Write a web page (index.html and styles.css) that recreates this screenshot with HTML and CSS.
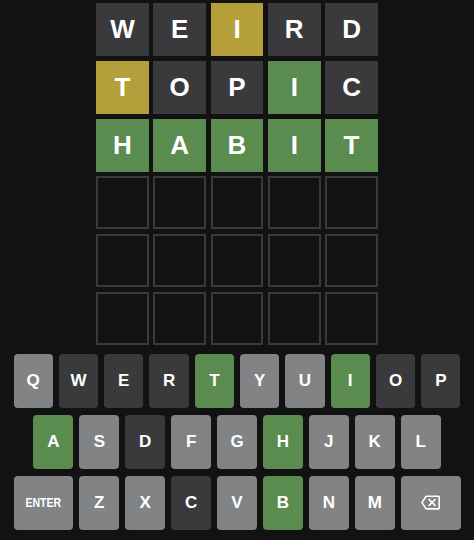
FILE: index.html
```
<!DOCTYPE html>
<html>
<head>
<meta charset="utf-8">
<link rel="stylesheet" href="styles.css">
</head>
<body>
<div class="board">
  <div class="tile absent">W</div><div class="tile absent">E</div><div class="tile present">I</div><div class="tile absent">R</div><div class="tile absent">D</div>
  <div class="tile present">T</div><div class="tile absent">O</div><div class="tile absent">P</div><div class="tile correct">I</div><div class="tile absent">C</div>
  <div class="tile correct">H</div><div class="tile correct">A</div><div class="tile correct">B</div><div class="tile correct">I</div><div class="tile correct">T</div>
  <div class="tile empty"></div><div class="tile empty"></div><div class="tile empty"></div><div class="tile empty"></div><div class="tile empty"></div>
  <div class="tile empty"></div><div class="tile empty"></div><div class="tile empty"></div><div class="tile empty"></div><div class="tile empty"></div>
  <div class="tile empty"></div><div class="tile empty"></div><div class="tile empty"></div><div class="tile empty"></div><div class="tile empty"></div>
</div>
<div class="keyboard">
  <div class="krow">
    <div class="key">Q</div><div class="key k-absent">W</div><div class="key k-absent">E</div><div class="key k-absent">R</div><div class="key k-correct">T</div><div class="key">Y</div><div class="key">U</div><div class="key k-correct">I</div><div class="key k-absent">O</div><div class="key k-absent">P</div>
  </div>
  <div class="krow">
    <div class="half"></div>
    <div class="key k-correct">A</div><div class="key">S</div><div class="key k-absent">D</div><div class="key">F</div><div class="key">G</div><div class="key k-correct">H</div><div class="key">J</div><div class="key">K</div><div class="key">L</div>
    <div class="half"></div>
  </div>
  <div class="krow">
    <div class="key wide"><span class="enter">ENTER</span></div><div class="key">Z</div><div class="key">X</div><div class="key k-absent">C</div><div class="key">V</div><div class="key k-correct">B</div><div class="key">N</div><div class="key">M</div>
    <div class="key wide"><svg class="bksp" viewBox="0 0 24 24" width="19" height="19"><path fill="#ffffff" d="M22 3H7c-.69 0-1.230.35-1.59.88L0 12l5.41 8.110c.36.53.9.89 1.59.89h15c1.1 0 2-.9 2-2V5c0-1.1-.9-2-2-2zm0 16H7.07L2.4 12l4.66-7H22v14zm-11.59-2L14 13.41 17.59 17 19 15.59 15.41 12 19 8.41 17.59 7 14 10.59 10.41 7 9 8.41 12.59 12 9 15.59z"/></svg></div>
  </div>
</div>
</body>
</html>
```
FILE: styles.css
```
html, body {
  margin: 0;
  padding: 0;
  background: #121213;
  font-family: "Liberation Sans", Arial, sans-serif;
}
.board {
  width: 282px;
  margin: 3px auto 0;
  display: grid;
  grid-template-columns: repeat(5, 1fr);
  grid-auto-rows: 53px;
  column-gap: 4.3px;
  row-gap: 4.8px;
}
.tile {
  box-sizing: border-box;
  display: flex;
  align-items: center;
  justify-content: center;
  color: #ffffff;
  font-weight: bold;
  font-size: 26px;
}
.absent { background: #3a3a3c; }
.present { background: #b59f3b; }
.correct { background: #5a8c50; }
.empty { border: 2px solid #3a3a3c; }
.keyboard {
  width: 447px;
  margin: 9px auto 0;
}
.krow {
  display: flex;
  margin-bottom: 7px;
}
.key {
  flex: 1;
  height: 54px;
  border-radius: 4px;
  background: #818384;
  color: #ffffff;
  font-weight: bold;
  font-size: 17px;
  display: flex;
  align-items: center;
  justify-content: center;
}
.key + .key { margin-left: 6px; }
.half { flex: 0.5; }
.wide { flex: 1.5; }
.k-absent { background: #3a3a3c; }
.k-correct { background: #5a8c50; }
.enter {
  display: inline-block;
  font-size: 12.5px;
  transform: scaleX(0.84);
}
.bksp { display: block; }
```
